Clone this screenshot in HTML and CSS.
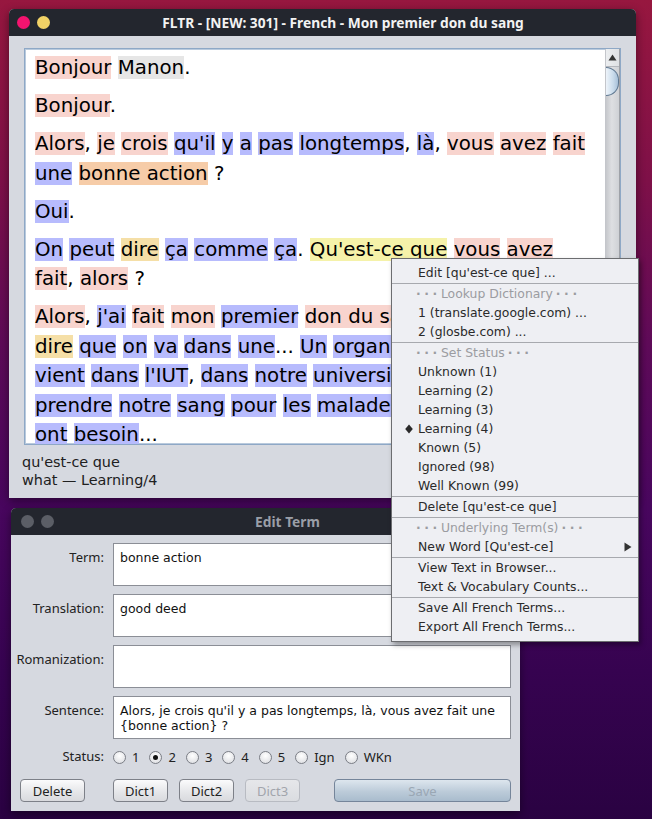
FILE: index.html
```html
<!DOCTYPE html>
<html>
<head>
<meta charset="utf-8">
<title>FLTR</title>
<link rel="stylesheet" href="styles.css">
</head>
<body>
<div class="win main-win">
  <div class="titlebar main-tb">
    <div class="lights"><span class="light red"></span><span class="light yellow"></span></div>
    <div class="title">FLTR - [NEW: 301] - French - Mon premier don du sang</div>
  </div>
  <div class="main-body">
    <div class="textarea">
      <div class="text">
        <p><span class="w1">Bonjour</span> <span class="wg">Manon</span>.</p>
        <p><span class="w1">Bonjour</span>.</p>
        <p><span class="w1">Alors</span>, <span class="w1">je</span> <span class="w1">crois</span> <span class="wb">qu'il</span> <span class="wb">y</span> <span class="wb">a</span> <span class="wb">pas</span> <span class="wb">longtemps</span>, <span class="wb">là</span>, <span class="w1">vous</span> <span class="w1">avez</span> <span class="w1">fait</span><br><span class="wb">une</span> <span class="wo">bonne action</span> ?</p>
        <p><span class="wb">Oui</span>.</p>
        <p><span class="wb">On</span> <span class="wb">peut</span> <span class="wd">dire</span> <span class="wb">ça</span> <span class="wb">comme</span> <span class="wb">ça</span>. <span class="wy">Qu'est-ce que</span> <span class="w1">vous</span> <span class="w1">avez</span><br><span class="w1">fait</span>, <span class="w1">alors</span> ?</p>
        <p><span class="w1">Alors</span>, <span class="wb">j'ai</span> <span class="w1">fait</span> <span class="w1">mon</span> <span class="wb">premier</span> <span class="w1">don du sang</span>, <span class="wb">c'est-à-</span><br><span class="wd">dire</span> <span class="wb">que</span> <span class="wb">on</span> <span class="wb">va</span> <span class="wb">dans</span> <span class="wb">une</span>... <span class="wb">Un</span> <span class="wb">organisme</span> <span class="wb">qui</span><br><span class="wb">vient</span> <span class="wb">dans</span> <span class="wb">l'IUT</span>, <span class="wb">dans</span> <span class="wb">notre</span> <span class="wb">université</span>, <span class="wb">pour</span><br><span class="wb">prendre</span> <span class="wb">notre</span> <span class="wb">sang</span> <span class="wb">pour</span> <span class="wb">les</span> <span class="wb">malades</span> <span class="wb">qui</span> <span class="wb">en</span><br><span class="wb">ont</span> <span class="wb">besoin</span>...</p>
      </div>
      <div class="scrollbar">
        <div class="sb-up"><svg width="9" height="7" viewBox="0 0 9 7"><polygon points="4.5,0.5 8.5,6.5 0.5,6.5" fill="#333"/></svg></div>
        <div class="sb-thumb"></div>
        <div class="sb-track"></div>
      </div>
    </div>
    <div class="status">qu'est-ce que<br>what — Learning/4</div>
  </div>
</div>

<div class="win edit-win">
  <div class="titlebar edit-tb">
    <div class="lights"><span class="light gray"></span><span class="light gray"></span></div>
    <div class="title dim">Edit Term</div>
  </div>
  <div class="form">
    <div class="lbl">Term:</div><div class="field">bonne action</div>
    <div class="lbl">Translation:</div><div class="field">good deed</div>
    <div class="lbl">Romanization:</div><div class="field"></div>
    <div class="lbl">Sentence:</div><div class="field">Alors, je crois qu'il y a pas longtemps, là, vous avez fait une {bonne action} ?</div>
    <div class="lbl status-lbl">Status:</div>
    <div class="radios">
      <span class="radio"><span class="rb"></span>1</span>
      <span class="radio"><span class="rb on"></span>2</span>
      <span class="radio"><span class="rb"></span>3</span>
      <span class="radio"><span class="rb"></span>4</span>
      <span class="radio"><span class="rb"></span>5</span>
      <span class="radio"><span class="rb"></span>Ign</span>
      <span class="radio"><span class="rb"></span>WKn</span>
    </div>
    <div class="buttons">
      <button class="btn del">Delete</button>
      <div class="dicts">
        <button class="btn dict">Dict1</button>
        <button class="btn dict">Dict2</button>
        <button class="btn dict disabled">Dict3</button>
      </div>
      <button class="btn save">Save</button>
    </div>
  </div>
</div>

<div class="menu">
  <div class="mi">Edit [qu'est-ce que] ...</div>
  <div class="sep"></div>
  <div class="mi hdr"><span class="dots">···</span>Lookup Dictionary<span class="dots after">···</span></div>
  <div class="mi">1 (translate.google.com) ...</div>
  <div class="mi">2 (glosbe.com) ...</div>
  <div class="sep"></div>
  <div class="mi hdr"><span class="dots">···</span>Set Status<span class="dots after">···</span></div>
  <div class="mi">Unknown (1)</div>
  <div class="mi">Learning (2)</div>
  <div class="mi">Learning (3)</div>
  <div class="mi checked"><svg class="diamond" width="8" height="10" viewBox="0 0 8 10"><polygon points="4,0.5 7.8,5 4,9.5 0.2,5" fill="#2a2a2a"/></svg>Learning (4)</div>
  <div class="mi">Known (5)</div>
  <div class="mi">Ignored (98)</div>
  <div class="mi">Well Known (99)</div>
  <div class="sep"></div>
  <div class="mi">Delete [qu'est-ce que]</div>
  <div class="sep"></div>
  <div class="mi hdr"><span class="dots">···</span>Underlying Term(s)<span class="dots after">···</span></div>
  <div class="mi sub">New Word [Qu'est-ce]<svg width="8" height="10" viewBox="0 0 8 10"><polygon points="0.5,0.5 7.5,5 0.5,9.5" fill="#333"/></svg></div>
  <div class="sep"></div>
  <div class="mi">View Text in Browser...</div>
  <div class="mi">Text &amp; Vocabulary Counts...</div>
  <div class="sep"></div>
  <div class="mi">Save All French Terms...</div>
  <div class="mi">Export All French Terms...</div>
</div>
</body>
</html>
```

FILE: styles.css
```css
* { box-sizing: border-box; }

html, body {
  margin: 0;
  padding: 0;
}

body {
  width: 652px;
  height: 819px;
  overflow: hidden;
  position: relative;
  font-family: "DejaVu Sans", sans-serif;
  background: linear-gradient(to bottom, #97173f 0%, #7e1048 22%, #5e0a58 42%, #48065e 62%, #360350 82%, #2a0242 100%);
}

.win {
  position: absolute;
  background: #d6d9e0;
  border-radius: 5px 5px 0 0;
  box-shadow: 0 3px 10px rgba(0, 0, 0, 0.45);
  display: flex;
  flex-direction: column;
}

.main-win {
  left: 9px;
  top: 9px;
  width: 627px;
  height: 489px;
}

.edit-win {
  left: 11px;
  top: 508px;
  width: 509px;
  height: 303px;
}

.titlebar {
  height: 27px;
  flex: none;
  background: #23262e;
  border-radius: 5px 5px 0 0;
  display: flex;
  align-items: center;
}

.lights {
  display: flex;
  gap: 7px;
  flex: none;
}

.main-tb .lights { padding-left: 8px; }
.edit-tb .lights { padding-left: 10px; }

.light {
  width: 13px;
  height: 13px;
  border-radius: 50%;
  display: block;
}

.light.red { background: #f5136f; }
.light.yellow { background: #f2d266; }
.light.gray { background: #5b5e66; }

.title {
  flex: 1;
  text-align: center;
  font-family: "Noto Sans", sans-serif;
  font-weight: 700;
  font-size: 13.75px;
  color: #f2f2f2;
  white-space: nowrap;
  padding-left: 0;
}

.edit-tb .title { padding-left: 1px; }

.title.dim { color: #9a9ea7; }

.main-body {
  flex: 1;
  padding: 12px 15px 0 13px;
  display: flex;
  flex-direction: column;
}

.textarea {
  margin-left: 2px;
  width: 597px;
  height: 397px;
  flex: none;
  background: #fff;
  border: 1px solid #8ea8c6;
  box-shadow: inset 0 0 0 1px #b9cadd;
  display: flex;
  overflow: hidden;
}

.text {
  flex: 1;
  padding: 4px 10px 0 10px;
  overflow: hidden;
  white-space: nowrap;
  font-size: 19.8px;
  line-height: 29.5px;
  color: #000;
}

.text p {
  margin: 0 0 8.5px 0;
}

.w1 { background: #f8d4ce; }
.wb { background: #b7bbfd; }
.wo { background: #f6cca8; }
.wy { background: #f5f2a9; }
.wd { background: #f5dfa7; }
.wg { background: #e6e6e6; }

.scrollbar {
  width: 15px;
  flex: none;
  display: flex;
  flex-direction: column;
  border-left: 1px solid #c4c6cb;
  border-right: 1px solid #9fa2a8;
  background: linear-gradient(to right, #c6c8cc, #dedfe2 45%, #cfd1d5);
}

.sb-up {
  height: 18px;
  flex: none;
  display: flex;
  align-items: center;
  justify-content: center;
  background: linear-gradient(to right, #eceef0, #dfe1e4);
  border-bottom: 1px solid #b4b7bd;
}

.sb-thumb {
  height: 29px;
  flex: none;
  border: 1px solid #5f7891;
  border-left: none;
  border-radius: 0 14px 14px 0 / 0 14px 14px 0;
  background: linear-gradient(to right, #eef4fa, #c9dbeb 60%, #a8c0d8);
}

.sb-track { flex: 1; }

.status {
  margin-top: 8px;
  font-size: 14.4px;
  line-height: 18px;
  color: #202020;
}

/* Edit term */
.form {
  flex: 1;
  display: grid;
  grid-template-columns: 93px 398px;
  column-gap: 9px;
  row-gap: 8px;
  padding: 8px 9px 0 0;
  align-content: start;
}

.lbl {
  text-align: right;
  font-family: "Noto Sans", sans-serif;
  font-size: 13px;
  line-height: 15px;
  padding-top: 7px;
  color: #222;
}

.field {
  height: 43px;
  background: #fff;
  border: 1px solid #8b8e96;
  padding: 7px 6px 6px 6px;
  font-size: 12.5px;
  line-height: 14.5px;
  color: #111;
}

.status-lbl {
  padding-top: 1px;
  margin-top: 1px;
}

.radios {
  margin-top: 1px;
  height: 18px;
  display: flex;
  align-items: center;
  font-family: "Noto Sans", sans-serif;
  font-size: 13px;
  color: #222;
}

.radio {
  display: flex;
  align-items: center;
  gap: 6px;
  margin-right: 10px;
}

.rb {
  width: 13px;
  height: 13px;
  border-radius: 50%;
  border: 1px solid #7b7e86;
  background: radial-gradient(circle at 50% 35%, #ffffff, #e4e5e8 70%, #d4d6da);
  display: flex;
  align-items: center;
  justify-content: center;
}

.rb.on::after {
  content: "";
  width: 5px;
  height: 5px;
  border-radius: 50%;
  background: #111;
}

.buttons {
  grid-column: 1 / 3;
  display: flex;
  align-items: center;
  margin-top: 5px;
  padding-left: 9px;
}

.btn {
  height: 23px;
  border: 1px solid #7d8088;
  border-radius: 4px;
  background: linear-gradient(to bottom, #fbfbfc, #e4e5e8 60%, #d9dade);
  font-family: "Noto Sans", sans-serif;
  font-size: 13px;
  color: #222;
  padding: 0;
  margin: 0;
}

.del { width: 65px; }

.dicts {
  display: flex;
  gap: 11px;
  margin-left: 28px;
}

.dict { width: 55px; }

.dict.disabled {
  border-color: #b8bbc2;
  color: #a2a5ac;
  background: linear-gradient(to bottom, #e6e7ea, #dadce0);
}

.save {
  margin-left: auto;
  width: 177px;
  border-color: #75859a;
  background: linear-gradient(to bottom, #dde6ee, #bccbd9 55%, #a9bccd);
  color: #9aa7b4;
}

/* Popup menu */
.menu {
  position: absolute;
  left: 391px;
  top: 258px;
  width: 248px;
  height: 384px;
  background: #eeeff3;
  border: 1px solid #6c6d70;
  box-shadow: 2px 3px 5px rgba(0, 0, 0, 0.35);
  padding: 4px 0 5px 0;
  font-size: 12.4px;
  color: #2a2a2a;
}

.mi {
  height: 19px;
  line-height: 19px;
  padding-left: 26px;
  white-space: nowrap;
  display: flex;
  align-items: center;
}

.mi.hdr { color: #9b9ca1; }

.dots {
  letter-spacing: 3.6px;
  margin-left: -2px;
  font-weight: 700;
}

.dots.after { margin-left: 3px; }

.mi.checked { padding-left: 13px; }

.diamond { margin-right: 5px; flex: none; }

.mi.sub {
  justify-content: space-between;
  padding-right: 6px;
}

.sep {
  margin-top: 1px;
  height: 1px;
  background: #a7a9ae;
}
```
